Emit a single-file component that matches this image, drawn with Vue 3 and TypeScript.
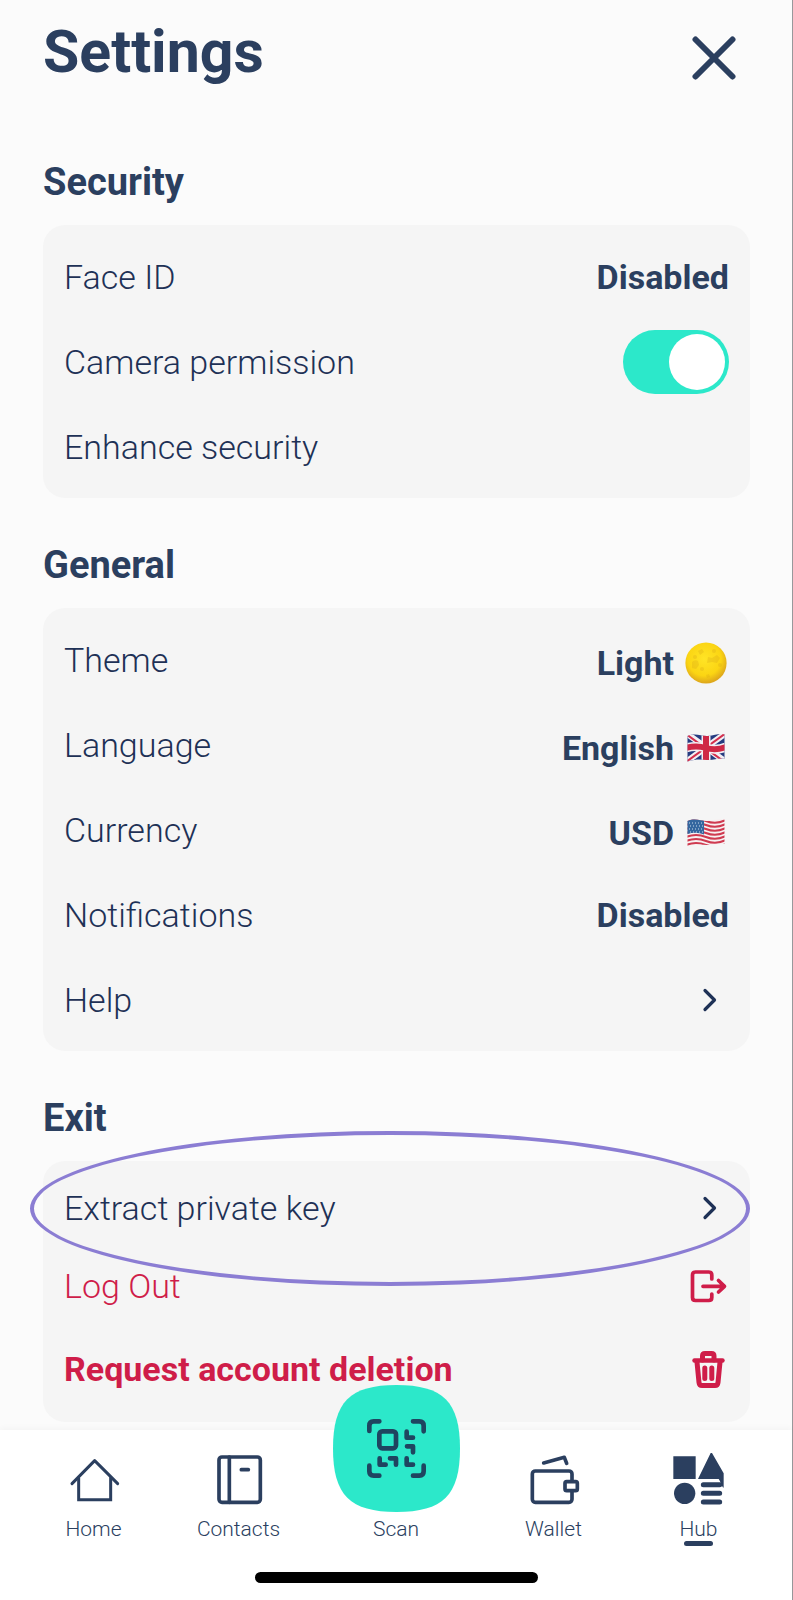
<script setup lang="ts">
import { ref } from 'vue'

type Icon = 'moon' | 'uk' | 'us' | 'chevron' | 'logout' | 'trash'

interface Row {
  label: string
  value?: string
  icon?: Icon
  toggle?: boolean
  tone?: 'danger' | 'danger-strong'
  size?: 'short' | 'medium' | 'tall'
  ringed?: boolean
}

interface Section {
  title: string
  rows: Row[]
}

const cameraAllowed = ref(true)

const sections: Section[] = [
  {
    title: 'Security',
    rows: [
      { label: 'Face ID', value: 'Disabled' },
      { label: 'Camera permission', toggle: true },
      { label: 'Enhance security' },
    ],
  },
  {
    title: 'General',
    rows: [
      { label: 'Theme', value: 'Light', icon: 'moon' },
      { label: 'Language', value: 'English', icon: 'uk' },
      { label: 'Currency', value: 'USD', icon: 'us' },
      { label: 'Notifications', value: 'Disabled' },
      { label: 'Help', icon: 'chevron' },
    ],
  },
  {
    title: 'Exit',
    rows: [
      { label: 'Extract private key', icon: 'chevron', size: 'short', ringed: true },
      { label: 'Log Out', icon: 'logout', tone: 'danger', size: 'medium' },
      { label: 'Request account deletion', icon: 'trash', tone: 'danger-strong', size: 'tall' },
    ],
  },
]

const tabs = ['Home', 'Contacts', 'Scan', 'Wallet', 'Hub'] as const
const activeTab = 'Hub'
</script>

<template>
  <div class="screen">
    <main class="content">
      <header class="header">
        <h1 class="title">Settings</h1>
        <button class="close" type="button" aria-label="Close">
          <svg viewBox="0 0 44 44" aria-hidden="true">
            <path d="M3.5 3.5 40.5 40.5M40.5 3.5 3.5 40.5" fill="none" stroke="currentColor" stroke-width="6" stroke-linecap="round" />
          </svg>
        </button>
      </header>

      <section v-for="section in sections" :key="section.title" class="section">
        <h2 class="heading">{{ section.title }}</h2>
        <ul class="card">
          <li v-for="row in section.rows" :key="row.label">
            <div v-if="row.toggle" class="row">
              <label for="camera">{{ row.label }}</label>
              <input id="camera" v-model="cameraAllowed" class="switch" type="checkbox" role="switch" />
            </div>
            <button v-else type="button" :class="['row', row.tone, row.size]">
              <span>{{ row.label }}</span>
              <span v-if="row.value" :class="['value', { pictured: row.icon }]">
                {{ row.value }}
                <svg v-if="row.icon === 'moon'" class="emoji" viewBox="0 0 44 42" aria-hidden="true">
                  <defs>
                    <radialGradient id="moonFill" cx="46%" cy="40%" r="58%">
                      <stop offset="0" stop-color="#ffe426" />
                      <stop offset=".7" stop-color="#fbd513" />
                      <stop offset="1" stop-color="#dfa91b" />
                    </radialGradient>
                  </defs>
                  <circle cx="21" cy="21" r="20.6" fill="url(#moonFill)" />
                  <g fill="#d9aa17" opacity=".3">
                    <path d="M7 20q3-3 6-1l1 4-3 4-4-1zM13 9l4-2 2 3-4 3zM23 15l4 1 5-3 3 3-3 5-5-1-5 1z" />
                    <circle cx="17" cy="27" r="2" />
                    <circle cx="29" cy="9" r="2" />
                    <circle cx="35" cy="23" r="2" />
                    <circle cx="10" cy="15" r="2" />
                    <path d="M21 33l3-1 1 3-3 1z" />
                  </g>
                </svg>
                <svg v-else-if="row.icon === 'uk'" class="emoji" viewBox="0 0 44 42" aria-hidden="true">
                  <defs>
                    <clipPath id="ukWave">
                      <path d="M2.500 9C11 5.500 16 9.500 23 9S34 6 39.500 7.500V32C34 30.500 29 33.500 22 33S11 32 2.500 34.500Z" />
                    </clipPath>
                  </defs>
                  <g clip-path="url(#ukWave)">
                    <path fill="#253b80" d="M0 0h44v42H0z" />
                    <path stroke="#f3eff3" stroke-width="6" d="M1 6 41 35M41 6 1 35" />
                    <path stroke="#d32f4d" stroke-width="2" d="M1 7 41 36M41 6 1 35" />
                    <path stroke="#f3eff3" stroke-width="9" fill="none" d="M21 4v34M1 21q10-3 20 0t20-1" />
                    <path stroke="#cf2846" stroke-width="6" fill="none" d="M21 4v34M1 21q10-3 20 0t20-1" />
                  </g>
                </svg>
                <svg v-else-if="row.icon === 'us'" class="emoji" viewBox="0 0 44 42" aria-hidden="true">
                  <defs>
                    <clipPath id="usWave">
                      <path d="M2.500 9C11 5.500 16 9.500 23 9S34 6 39.500 7.500V32C34 30.500 29 33.500 22 33S11 32 2.500 34.500Z" />
                    </clipPath>
                  </defs>
                  <g clip-path="url(#usWave)">
                    <path fill="#f7f0f1" d="M0 0h44v42H0z" />
                    <path
                      fill="none"
                      stroke="#cf3a50"
                      stroke-width="2"
                      d="M1 9q10-4 20 0t20-1M1 13q10-4 20 0t20-1M1 17q10-4 20 0t20-1M1 21q10-4 20 0t20-1M1 25q10-4 20 0t20-1M1 29q10-4 20 0t20-1M1 33q10-4 20 0t20-1"
                    />
                    <path fill="#34679f" d="M0 5h19v17.500Q10 19 0 23z" />
                    <path stroke="#c9dcec" stroke-width="1" stroke-dasharray="1 2" d="M4 11h14M5 14h14M4 17h14M5 20h14" />
                  </g>
                </svg>
              </span>
              <svg v-else-if="row.icon" class="icon" viewBox="0 0 40 40" fill="none" stroke="currentColor" stroke-linecap="round" stroke-linejoin="round" aria-hidden="true">
                <path v-if="row.icon === 'chevron'" d="M16 10.500 25.500 20 16 29.500" stroke-width="3.200" />
                <path
                  v-else-if="row.icon === 'logout'"
                  stroke-width="3.700"
                  d="M22.800 13V9Q22.800 6 19.800 6H6.500Q3.500 6 3.500 9V31.500Q3.500 34.500 6.500 34.500H19.800Q22.800 34.500 22.800 31.500V28M14 20.300H35M29.500 14.500 35.500 20.300 29.500 26"
                />
                <g v-else>
                  <path stroke-width="4.400" d="M5.500 11.500H33.500" />
                  <path stroke-width="5" d="M13.500 11V7Q13.500 4.600 16 4.600H22.500Q25 4.600 25 7V11M8 13 10 33.500Q10.300 36.500 13 36.500H26Q28.700 36.500 29 33.500L31 13M15.800 19V29.500M22.800 19V29.500" />
                </g>
              </svg>
            </button>
            <span v-if="row.ringed" class="ring" aria-hidden="true"></span>
          </li>
        </ul>
      </section>
    </main>

    <footer class="footer">
      <nav class="tabs" aria-label="Main">
        <a v-for="tab in tabs" :key="tab" href="#" :class="['tab', { scan: tab === 'Scan', active: tab === activeTab }]">
          <svg v-if="tab === 'Scan'" class="scan-icon" viewBox="0 0 127 127" aria-hidden="true">
            <path fill="#2ce8ca" d="M63.500 0C110 0 127 17 127 63.500S110 127 63.500 127 0 110 0 63.500 17 0 63.500 0Z" />
            <g transform="translate(34 34) scale(.33333)" fill="none" stroke="#1f4560" stroke-width="14" stroke-linecap="round" stroke-linejoin="round">
              <path d="M7 36V20Q7 7 20 7H37M138 7H157Q170 7 170 20V37M7 140V157Q7 170 20 170H37M138 170H157Q170 170 170 157V140" />
              <rect x="37" y="37" width="50" height="51" rx="9" />
              <path d="M119 38V56H138M120 82H138V100M38 118V137H56M69 118H87V137M119 118V137H138" />
            </g>
          </svg>
          <svg v-else class="tab-icon" viewBox="0 0 168 168" fill="none" stroke="currentColor" stroke-linecap="round" stroke-linejoin="round" aria-hidden="true">
            <g v-if="tab === 'Home'" stroke-width="9">
              <path d="M18 95 86 26 155 95" />
              <path stroke-linejoin="miter" d="M38 78V143H134V78" />
            </g>
            <g v-else-if="tab === 'Contacts'" stroke-width="11">
              <rect x="24" y="15" width="124" height="136" rx="9" />
              <path d="M55 15V151" />
              <path d="M91 53H112" />
            </g>
            <g v-else-if="tab === 'Wallet'" stroke-width="11">
              <path d="M53 33 115 16 122 34" />
              <rect x="19" y="57" width="119" height="94" rx="9" />
              <rect x="117" y="89" width="37" height="27" rx="5" fill="#fff" />
            </g>
            <g v-else stroke="none" fill="currentColor">
              <path d="M7 13H74V81H7ZM119 3H123L158 64V107C151 104 150 91 143 81H81Z" />
              <circle cx="41" cy="124" r="32" />
              <path stroke="currentColor" stroke-width="15" d="M97 98H146M97 124H146M97 150H146" />
            </g>
          </svg>
          <span class="tab-label">{{ tab }}</span>
        </a>
      </nav>
      <div class="home-bar"></div>
    </footer>
  </div>
</template>

<style>
body {
  margin: 0;
  background: #fbfbfb;
}
</style>

<style scoped>
.screen {
  --navy: #2b3f5f;
  --ink: #1e3156;
  --red: #cf1d49;
  display: flex;
  flex-direction: column;
  min-height: 100vh;
  box-sizing: border-box;
  border-right: 1px solid #98989b;
  background: #fbfbfb;
  color: var(--navy);
  font-family: Roboto, 'Liberation Sans', sans-serif;
}

.content {
  flex: 1;
  padding: 18px 42px 7px 43px;
}

.header {
  display: flex;
  align-items: center;
  justify-content: space-between;
  padding-right: 14px;
  margin-bottom: 74px;
}

.title {
  margin: 0;
  font-size: 59px;
  line-height: 68px;
  font-weight: 700;
}

.close {
  width: 44px;
  height: 44px;
  margin-top: 12px;
  padding: 0;
  border: 0;
  background: none;
  color: var(--navy);
  cursor: pointer;
}

.close svg {
  display: block;
}

.section + .section {
  margin-top: 45px;
}

.heading {
  margin: 0 0 21px;
  font-size: 38px;
  line-height: 44px;
  font-weight: 700;
}

.card {
  margin: 0;
  padding: 9px 0;
  list-style: none;
  border-radius: 22px;
  background: #f5f5f5;
}

.card li {
  position: relative;
}

.row {
  display: flex;
  align-items: center;
  justify-content: space-between;
  width: 100%;
  height: 85px;
  box-sizing: border-box;
  padding: 0 21px;
  border: 0;
  background: none;
  color: var(--ink);
  font-family: inherit;
  font-size: 34px;
  font-weight: 300;
  line-height: 42px;
  text-align: left;
  cursor: pointer;
}

.row.short {
  height: 76px;
}

.row.medium {
  height: 79px;
}

.row.tall {
  height: 88px;
}

.row.danger {
  color: var(--red);
}

.row.danger-strong {
  color: var(--red);
  font-weight: 700;
}

.value {
  display: flex;
  align-items: center;
  gap: 11px;
  color: var(--navy);
  font-weight: 700;
}

.pictured {
  padding-top: 6px;
}

.emoji {
  width: 44px;
  height: 42px;
}

.icon {
  width: 40px;
  height: 40px;
}

.switch {
  appearance: none;
  display: flex;
  width: 106px;
  height: 64px;
  margin: 0;
  padding: 4px;
  box-sizing: border-box;
  border-radius: 32px;
  background: #c9ccd1;
  cursor: pointer;
}

.switch::before {
  content: '';
  width: 56px;
  height: 56px;
  border-radius: 50%;
  background: #fff;
}

.switch:checked {
  justify-content: flex-end;
  background: #2ce8ca;
}

.ring {
  position: absolute;
  inset: -39px 0 -40px -13px;
  box-sizing: border-box;
  border: 4px solid #8b7dd3;
  border-radius: 50%;
  pointer-events: none;
}

.footer {
  position: relative;
  padding: 22px 21px 17px;
  background: #fff;
  box-shadow: 0 -2px 6px rgba(0, 0, 0, 0.03);
}

.tabs {
  display: grid;
  grid-template-columns: 1fr 1fr 170px 1fr 1fr;
}

.tab {
  position: relative;
  display: flex;
  flex-direction: column;
  align-items: center;
  gap: 9px;
  color: var(--navy);
  text-decoration: none;
}

.tab-icon {
  width: 56px;
  height: 56px;
}

.tab.scan {
  gap: 5px;
  margin-top: -67px;
}

.scan-icon {
  width: 127px;
  height: 127px;
}

.tab-label {
  font-size: 21px;
  line-height: 24px;
  font-weight: 300;
}

.tab.active::after {
  content: '';
  position: absolute;
  top: 100%;
  width: 29px;
  height: 5px;
  border-radius: 3px;
  background: var(--navy);
}

.home-bar {
  width: 283px;
  height: 11px;
  margin: 31px auto 0;
  border-radius: 6px;
  background: #000;
}
</style>
